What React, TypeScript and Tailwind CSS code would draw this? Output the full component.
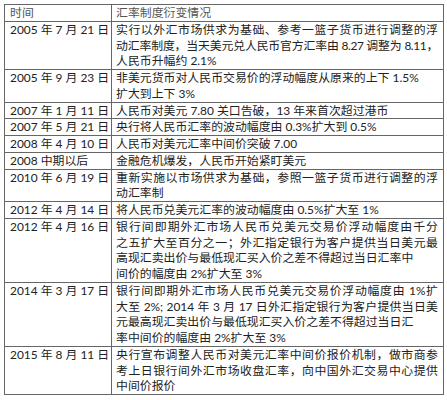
import React from "react";

type Row = { date: string; lines: [string, boolean, boolean?][] };

const rows: Row[] = [
  {
    date: "2005 年 7 月 21 日",
    lines: [
      ["实行以外汇市场供求为基础、参考一篮子货币进行调整的浮", true],
      ["动汇率制度，当天美元兑人民币官方汇率由 8.27 调整为 8.11，", true, true],
      ["人民币升幅约 2.1%", false],
    ],
  },
  {
    date: "2005 年 9 月 23 日",
    lines: [
      ["非美元货币对人民币交易价的浮动幅度从原来的上下 1.5%", false],
      ["扩大到上下 3%", false],
    ],
  },
  { date: "2007 年 1 月 11 日", lines: [["人民币对美元 7.80 关口告破，13 年来首次超过港币", false]] },
  { date: "2007 年 5 月 21 日", lines: [["央行将人民币汇率的波动幅度由 0.3%扩大到 0.5%", false]] },
  { date: "2008 年 4 月 10 日", lines: [["人民币对美元汇率中间价突破 7.00", false]] },
  { date: "2008 中期以后", lines: [["金融危机爆发，人民币开始紧盯美元", false]] },
  {
    date: "2010 年 6 月 19 日",
    lines: [
      ["重新实施以市场供求为基础，参照一篮子货币进行调整的浮", true],
      ["动汇率制", false],
    ],
  },
  { date: "2012 年 4 月 14 日", lines: [["将人民币兑美元汇率的波动幅度由 0.5%扩大至 1%", false]] },
  {
    date: "2012 年 4 月 16 日",
    lines: [
      ["银行间即期外汇市场人民币兑美元交易价浮动幅度由千分", true],
      ["之五扩大至百分之一；外汇指定银行为客户提供当日美元最", true],
      ["高现汇卖出价与最低现汇买入价之差不得超过当日汇率中", false],
      ["间价的幅度由 2%扩大至 3%", false],
    ],
  },
  {
    date: "2014 年 3 月 17 日",
    lines: [
      ["银行间即期外汇市场人民币兑美元交易价浮动幅度由 1%扩", true],
      ["大至 2%; 2014 年 3 月 17 日外汇指定银行为客户提供当日美", true],
      ["元最高现汇卖出价与最低现汇买入价之差不得超过当日汇", false],
      ["率中间价的幅度由 2%扩大至 3%", false],
    ],
  },
  {
    date: "2015 年 8 月 11 日",
    lines: [
      ["央行宣布调整人民币对美元汇率中间价报价机制，做市商参", true],
      ["考上日银行间外汇市场收盘汇率，向中国外汇交易中心提供", true],
      ["中间价报价", false],
    ],
  },
];

export default function App() {
  return (
    <div className="w-[447px] h-[400px] bg-white pt-[4px] pl-[4px]">
      <table
        className="border-collapse w-[440px] table-fixed text-[11.9px] leading-[15.75px] text-[#222]"
        style={{ fontFamily: '"Lato", "Noto Sans CJK SC", sans-serif' }}
      >
        <colgroup>
          <col className="w-[107px]" />
          <col />
        </colgroup>
        <tbody>
          <tr>
            <td className="border border-[#666] pl-[5px] pr-[4px] py-0 align-top text-[#555]">时间</td>
            <td className="border border-[#666] pl-[4px] pr-[5px] py-0 align-top text-[#555]">汇率制度衍变情况</td>
          </tr>
          {rows.map((r) => (
            <tr key={r.date}>
              <td className="border border-[#666] pl-[5px] pr-[2px] py-0 align-top whitespace-nowrap">{r.date}</td>
              <td className="border border-[#666] pl-[4px] pr-[5px] py-0 align-top">
                {r.lines.map(([t, j, tight], i) =>
                  j ? (
                    <div
                      key={i}
                      className={
                        tight
                          ? "text-justify [text-align-last:justify] tracking-[-0.4px] whitespace-nowrap"
                          : "text-justify [text-align-last:justify]"
                      }
                    >
                      {t}
                    </div>
                  ) : (
                    <div key={i}>{t}</div>
                  )
                )}
              </td>
            </tr>
          ))}
        </tbody>
      </table>
    </div>
  );
}
